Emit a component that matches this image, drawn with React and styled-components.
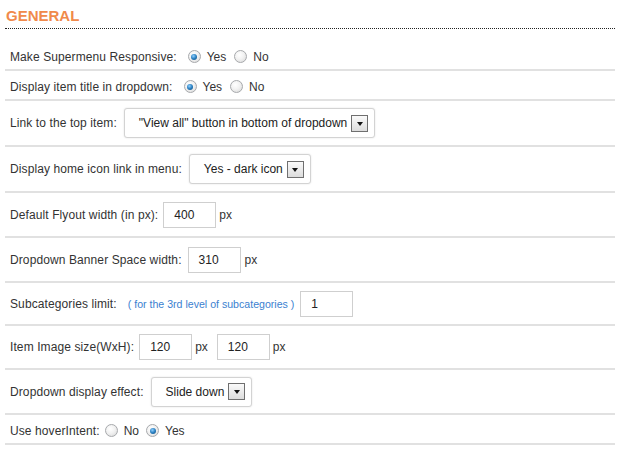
import React from "react";
import styled, { createGlobalStyle } from "styled-components";

const Global = createGlobalStyle`
  html, body { margin: 0; padding: 0; background: #fff; }
  body { font-family: "Liberation Sans", Arial, sans-serif; font-size: 12px; color: #333; }
`;

const Panel = styled.div`
  padding: 5px 4px 0 5px;
`;

const Heading = styled.h2`
  margin: 0;
  padding: 2px 0 3px 1px;
  font-size: 15px;
  font-weight: bold;
  color: #f08a4b;
  border-bottom: 1px dotted #222;
  line-height: 18px;
`;

const List = styled.div`
  margin-top: 12px;
`;

const Row = styled.div`
  display: flex;
  align-items: center;
  gap: ${(p) => p.$gap ?? 6}px;
  height: ${(p) => p.$h}px;
  padding-left: 5px;
  padding-top: ${(p) => p.$pt ?? 0}px;
  border-bottom: 2px solid #e1e1e1;
  box-sizing: border-box;
  font-size: 12px;
  color: #333;
`;

const Label = styled.span`
  margin-right: ${(p) => p.$mr ?? 0}px;
  white-space: nowrap;
  letter-spacing: 0.1px;
`;

const Note = styled.span`
  color: #3b7fd0;
  font-size: 10.6px;
  margin-left: 5px;
  margin-right: 0;
`;

const RadioGroup = styled.label`
  display: inline-flex;
  align-items: center;
  gap: 6px;
  margin-left: ${(p) => p.$ml ?? 0}px;
`;

const RadioDot = styled.span`
  width: 13px;
  height: 13px;
  border-radius: 50%;
  box-sizing: border-box;
  border: 1px solid #a7a9ac;
  background: radial-gradient(circle at 40% 35%, #ffffff 0%, #f2f2f2 45%, #d6d6d6 100%);
  position: relative;
  display: inline-block;
  &::after {
    content: "";
    display: ${(p) => (p.$on ? "block" : "none")};
    position: absolute;
    left: 2.5px;
    top: 2.5px;
    width: 6px;
    height: 6px;
    border-radius: 50%;
    background: radial-gradient(circle at 40% 35%, #8fd0ff 0%, #2a7fc0 50%, #0c4a7a 100%);
  }
`;

const SelectBox = styled.div`
  display: inline-flex;
  align-items: center;
  height: 30px;
  box-sizing: border-box;
  padding: 0 6px 0 14px;
  gap: 4px;
  border: 1px solid #d3d3d3;
  border-radius: 3px;
  box-shadow: 0 0 2px rgba(0, 0, 0, 0.12);
  background: #fff;
  font-size: 12px;
  color: #222;
`;

const Arrow = styled.span`
  width: 17px;
  height: 17px;
  box-sizing: border-box;
  border: 1px solid #6f6f6f;
  background: linear-gradient(#fafafa, #dcdcdc);
  display: inline-flex;
  align-items: center;
  justify-content: center;
  &::after {
    content: "";
    border-left: 3.5px solid transparent;
    border-right: 3.5px solid transparent;
    border-top: 4px solid #111;
    margin-top: 1px;
  }
`;

const TextInput = styled.div`
  width: ${(p) => p.$w ?? 53}px;
  height: 26px;
  box-sizing: border-box;
  border: 1px solid #cfcfcf;
  display: inline-flex;
  align-items: center;
  padding-left: 10px;
  font-size: 12px;
  color: #222;
  background: #fff;
`;

const Unit = styled.span`
  margin-left: -2px;
  margin-right: ${(p) => p.$mr ?? 0}px;
`;

const Radio = ({ on, label, ml }) => (
  <RadioGroup $ml={ml}>
    <RadioDot $on={on} />
    <span>{label}</span>
  </RadioGroup>
);

const Select = ({ value }) => (
  <SelectBox>
    <span>{value}</span>
    <Arrow />
  </SelectBox>
);

export default function App() {
  return (
    <>
      <Global />
      <Panel>
        <Heading>GENERAL</Heading>
        <List>
          <Row $h={30} $pt={3}>
            <Label $mr={5}>Make Supermenu Responsive:</Label>
            <Radio on label="Yes" />
            <Radio label="No" ml={2} />
          </Row>
          <Row $h={30} $pt={3}>
            <Label $mr={5}>Display item title in dropdown:</Label>
            <Radio on label="Yes" />
            <Radio label="No" ml={2} />
          </Row>
          <Row $h={46} $gap={7}>
            <Label>Link to the top item:</Label>
            <Select value={'"View all" button in bottom of dropdown'} />
          </Row>
          <Row $h={46} $gap={7}>
            <Label>Display home icon link in menu:</Label>
            <Select value="Yes - dark icon" />
          </Row>
          <Row $h={45} $gap={5}>
            <Label>Default Flyout width (in px):</Label>
            <TextInput>400</TextInput>
            <Unit>px</Unit>
          </Row>
          <Row $h={45} $gap={6}>
            <Label>Dropdown Banner Space width:</Label>
            <TextInput>310</TextInput>
            <Unit>px</Unit>
          </Row>
          <Row $h={43} $gap={6}>
            <Label>Subcategories limit:</Label>
            <Note>( for the 3rd level of subcategories )</Note>
            <TextInput>1</TextInput>
          </Row>
          <Row $h={44} $gap={5}>
            <Label $mr={0}>Item Image size(WxH):</Label>
            <TextInput>120</TextInput>
            <Unit $mr={4}>px</Unit>
            <TextInput>120</TextInput>
            <Unit $ml={0}>px</Unit>
          </Row>
          <Row $h={45} $gap={7}>
            <Label>Dropdown display effect:</Label>
            <Select value="Slide down" />
          </Row>
          <Row $h={30} $pt={3} $gap={5}>
            <Label>Use hoverIntent:</Label>
            <Radio label="No" />
            <Radio on label="Yes" ml={2} />
          </Row>
        </List>
      </Panel>
    </>
  );
}
